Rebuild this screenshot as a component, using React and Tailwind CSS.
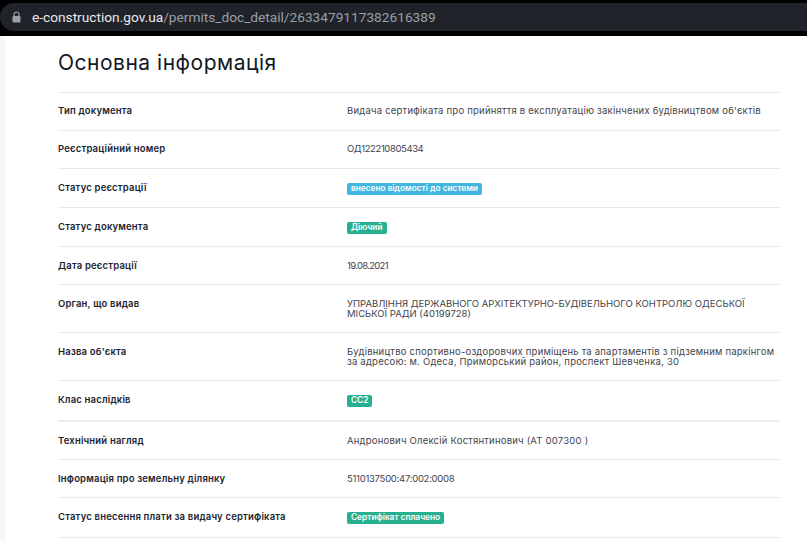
const font = "font-['Inter','Noto_Sans',sans-serif]";

const rows = [
  { label: "Тип документа", value: "Видача сертифіката про прийняття в експлуатацію закінчених будівництвом об'єктів", h: "h-[38px]", pt: "pt-[13px]" },
  { label: "Реєстраційний номер", value: "ОД122210805434", h: "h-[38px]", pt: "pt-[13px]", tracking: "tracking-[-0.4px]" },
  { label: "Статус реєстрації", badge: "внесено відомості до системи", color: "bg-[#41b6e0]", h: "h-[39px]" },
  { label: "Статус документа", badge: "Діючий", color: "bg-[#26b08f]", h: "h-[39px]" },
  { label: "Дата реєстрації", value: "19.08.2021", h: "h-[38px]", tracking: "tracking-[-0.7px]" },
  { label: "Орган, що видав", value: "УПРАВЛІННЯ ДЕРЖАВНОГО АРХІТЕКТУРНО-БУДІВЕЛЬНОГО КОНТРОЛЮ ОДЕСЬКОЇ МІСЬКОЇ РАДИ (40199728)", h: "h-[48px]", tracking: "tracking-[0px]" },
  { label: "Назва об'єкта", value: "Будівництво спортивно-оздоровчих приміщень та апартаментів з підземним паркінгом за адресою: м. Одеса, Приморський район, проспект Шевченка, 30", h: "h-[48px]" },
  { label: "Клас наслідків", badge: "СС2", color: "bg-[#26b08f]", h: "h-[41px]", thick: true },
  { label: "Технічний нагляд", value: "Андронович Олексій Костянтинович (АТ 007300 )", h: "h-[38px]" },
  { label: "Інформація про земельну ділянку", value: "5110137500:47:002:0008", h: "h-[38px]", tracking: "tracking-[-0.27px]" },
  { label: "Статус внесення плати за видачу сертифіката", badge: "Сертифікат сплачено", color: "bg-[#26b08f]", h: "h-[40px]" },
];

function Row({ row }) {
  return (
    <div className={`flex ${row.h} ${row.pt || "pt-[14px]"} border-b ${row.thick ? "border-b-2 border-[#e8edf1]" : "border-[#e8ebee]"}`}>
      <div className="w-[289px] shrink-0 text-[9.5px] leading-[10px] font-semibold tracking-[0.18px] text-[#1c2430]">{row.label}</div>
      <div className={`w-[431px] text-[9.5px] leading-[10px] text-[#3f444c] ${row.tracking || "tracking-[0.22px]"}`}>
        {row.badge ? (
          <span className={`block w-fit rounded-[2px] px-[4px] h-[12px] text-[8.3px] leading-[11px] tracking-normal font-semibold text-white ${row.color}`}>
            {row.badge}
          </span>
        ) : (
          row.value
        )}
      </div>
    </div>
  );
}

export default function App() {
  return (
    <div className={`h-[541px] w-[807px] overflow-hidden bg-white ${font}`}>
      <div className="h-9 bg-black pt-[3px]">
        <div className="flex h-7 items-center rounded-l-[14px] bg-[#202329] pl-3">
          <svg width="9" height="12" viewBox="0 0 9 12" className="mr-[11px]">
            <path d="M2 5V3.5a2.5 2.5 0 0 1 5 0V5" fill="none" stroke="#9aa0a6" strokeWidth="1.2" />
            <rect x="0.5" y="5" width="8" height="6.5" rx="1" fill="#9aa0a6" />
          </svg>
          <span className="font-['Roboto',sans-serif] text-[13.7px] text-[#e8eaed]">e-construction.gov.ua</span>
          <span className="font-['Roboto',sans-serif] text-[13.7px] text-[#9aa0a6]">/permits_doc_detail/2633479117382616389</span>
        </div>
      </div>
      <div className="flex h-[505px]">
        <div className="w-[5px] bg-[#f6f6f6]" />
        <div className="ml-[53px] w-[722px]">
          <h1 className="h-[57px] border-b border-[#e8ebee] pt-[14px] text-[21px] leading-[26px] tracking-[0.5px] text-[#14181f]">
            Основна інформація
          </h1>
          {rows.map((row) => (
            <Row key={row.label} row={row} />
          ))}
        </div>
      </div>
    </div>
  );
}
